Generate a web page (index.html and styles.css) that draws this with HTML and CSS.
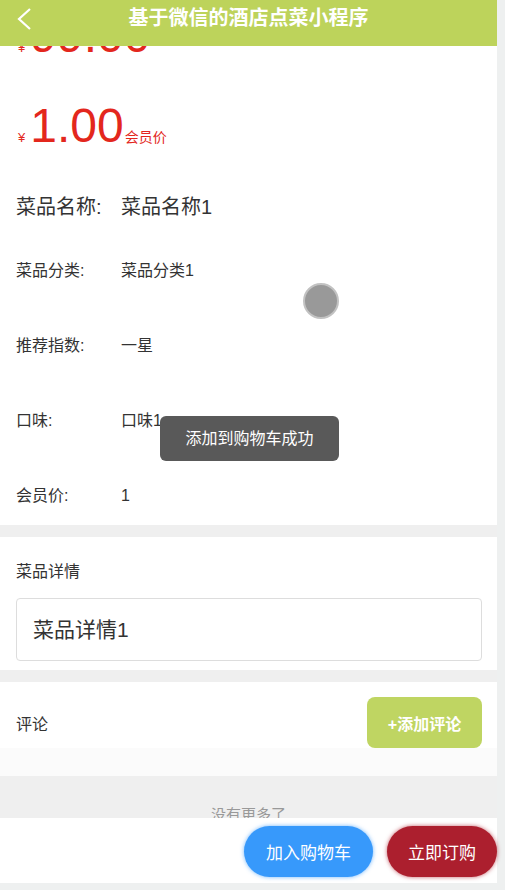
FILE: index.html
```html
<!DOCTYPE html>
<html lang="zh-CN">
<head>
    <meta charset="UTF-8">
    <meta name="viewport" content="width=device-width, initial-scale=1.0">
    <title>菜品详情</title>
    <link rel="stylesheet" href="styles.css">
</head>
<body>
    <div class="page">
        <header class="topbar">
            <a class="back" href="#">
                <svg width="16" height="24" viewBox="0 0 16 24"><polyline points="13,3 2,13 13,23" fill="none" stroke="#fff" stroke-width="2.2"/></svg>
            </a>
            <h1>基于微信的酒店点菜小程序</h1>
            <span></span>
        </header>

        <main class="content">
            <section class="card info">
                <div class="price old"><span class="yen">¥</span><span class="num">99.00</span></div>
                <div class="price"><span class="yen">¥</span><span class="num">1.00</span><span class="tag">会员价</span></div>
                <div class="row name"><span class="label">菜品名称:</span><span>菜品名称1</span></div>
                <div class="row first"><span class="label">菜品分类:</span><span>菜品分类1</span></div>
                <div class="row"><span class="label">推荐指数:</span><span>一星</span></div>
                <div class="row"><span class="label">口味:</span><span>口味1</span></div>
                <div class="row"><span class="label">会员价:</span><span>1</span></div>
            </section>

            <section class="card detail">
                <div class="detail-title">菜品详情</div>
                <div class="detail-box">菜品详情1</div>
            </section>

            <section class="card comments">
                <div class="comments-head">
                    <span>评论</span>
                    <button class="add-comment">+添加评论</button>
                </div>
                <div class="comments-list"></div>
            </section>

            <div class="nomore">没有更多了</div>
        </main>

        <footer class="actionbar">
            <button class="btn cart">加入购物车</button>
            <button class="btn buy">立即订购</button>
        </footer>

        <div class="loading"></div>
        <div class="toast">添加到购物车成功</div>
    </div>
</body>
</html>
```

FILE: styles.css
```css
body {
    margin: 0;
    background-color: #eef0f0;
    font-family: "Liberation Sans", "Noto Sans CJK SC", sans-serif;
    color: #333;
}
.page {
    position: relative;
    width: 497px;
    background-color: #efefef;
}
.topbar {
    display: grid;
    grid-template-columns: 1fr auto 1fr;
    align-items: start;
    height: 46px;
    background-color: #bdd35b;
}
.back {
    display: flex;
    align-items: center;
    height: 36px;
    padding-left: 17px;
}
.topbar h1 {
    margin: 0;
    font-size: 20px;
    line-height: 36px;
    color: #fff;
}
.card {
    background-color: #fff;
}
.info {
    overflow: hidden;
    padding: 0 16px 17px;
}
.price {
    display: flex;
    align-items: baseline;
    margin-top: 42px;
    color: #e3271d;
}
.price.old {
    margin-top: -34px;
}
.yen {
    font-size: 13px;
    line-height: 1;
    margin: 0 5px 0 2px;
}
.num {
    font-size: 48px;
    line-height: 1;
}
.tag {
    font-size: 14px;
    line-height: 1;
    margin-left: 1px;
}
.row {
    display: flex;
    margin-top: 51px;
    font-size: 16px;
    line-height: 24px;
}
.row.name {
    margin-top: 43px;
    font-size: 20px;
    line-height: 28px;
}
.row.first {
    margin-top: 38px;
}
.label {
    width: 105px;
    flex-shrink: 0;
}
.detail {
    margin-top: 12px;
    padding: 23px 15px 9px 16px;
}
.detail-title {
    font-size: 16px;
    line-height: 24px;
    margin-bottom: 14px;
}
.detail-box {
    box-sizing: border-box;
    height: 63px;
    padding-left: 16px;
    border: 1px solid #ddd;
    border-radius: 4px;
    font-size: 21px;
    line-height: 61px;
}
.comments {
    margin-top: 12px;
}
.comments-head {
    display: flex;
    justify-content: space-between;
    align-items: center;
    padding: 15px 15px 0 16px;
    font-size: 16px;
}
.add-comment {
    width: 115px;
    height: 51px;
    border: none;
    border-radius: 8px;
    background-color: #bfd562;
    color: #fff;
    font-family: inherit;
    font-size: 16px;
    font-weight: bold;
}
.comments-list {
    height: 28px;
    background-color: #fbfbfb;
}
.nomore {
    box-sizing: border-box;
    height: 42px;
    padding-top: 30px;
    overflow: hidden;
    text-align: center;
    font-size: 15px;
    line-height: 18px;
    color: #999;
}
.actionbar {
    display: flex;
    justify-content: flex-end;
    gap: 14px;
    height: 65px;
    padding-top: 8px;
    box-sizing: border-box;
    background-color: #fff;
}
.btn {
    height: 51px;
    border: none;
    border-radius: 26px;
    color: #fff;
    font-family: inherit;
    font-size: 17px;
}
.cart {
    width: 129px;
    background-color: #3799fb;
    box-shadow: 0 0 4px rgba(55, 153, 251, 0.7);
}
.buy {
    width: 110px;
    background-color: #ac1f2e;
    box-shadow: 0 0 4px rgba(172, 31, 46, 0.7);
}
.loading {
    position: absolute;
    left: 303px;
    top: 283px;
    width: 36px;
    height: 36px;
    box-sizing: border-box;
    border: 2px solid #c2c2c2;
    border-radius: 50%;
    background-color: #999;
}
.toast {
    position: absolute;
    left: 160px;
    top: 416px;
    width: 179px;
    height: 45px;
    border-radius: 6px;
    background-color: #595959;
    color: #fff;
    font-size: 16px;
    line-height: 45px;
    text-align: center;
}
```
